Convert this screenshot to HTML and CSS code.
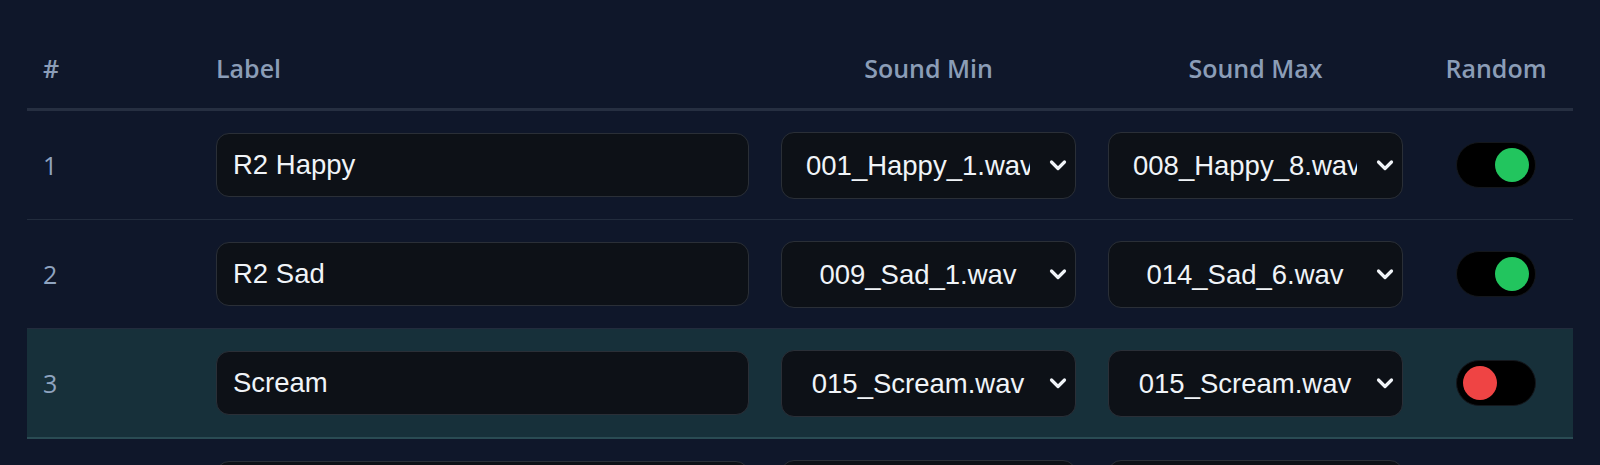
FILE: index.html
```html
<!DOCTYPE html>
<html lang="en">
<head>
    <meta charset="UTF-8">
    <meta name="viewport" content="width=device-width, initial-scale=1.0">
    <title>Sound Triggers</title>
    <link rel="stylesheet" href="styles.css">
</head>
<body>
    <div class="wrap">
        <table class="sounds">
            <colgroup>
                <col class="c-num">
                <col class="c-label">
                <col class="c-snd">
                <col class="c-snd">
                <col class="c-rand">
            </colgroup>
            <thead>
                <tr>
                    <th>#</th>
                    <th>Label</th>
                    <th class="center">Sound Min</th>
                    <th class="center">Sound Max</th>
                    <th class="center">Random</th>
                </tr>
            </thead>
            <tbody>
                <tr>
                    <td class="num">1</td>
                    <td><input class="label-input" type="text" value="R2 Happy"></td>
                    <td><select class="snd"><option>001_Happy_1.wav</option></select></td>
                    <td><select class="snd"><option>008_Happy_8.wav</option></select></td>
                    <td class="center"><label class="toggle on"><span class="knob"></span></label></td>
                </tr>
                <tr>
                    <td class="num">2</td>
                    <td><input class="label-input" type="text" value="R2 Sad"></td>
                    <td><select class="snd"><option>009_Sad_1.wav</option></select></td>
                    <td><select class="snd"><option>014_Sad_6.wav</option></select></td>
                    <td class="center"><label class="toggle on"><span class="knob"></span></label></td>
                </tr>
                <tr class="active">
                    <td class="num">3</td>
                    <td><input class="label-input" type="text" value="Scream"></td>
                    <td><select class="snd"><option>015_Scream.wav</option></select></td>
                    <td><select class="snd"><option>015_Scream.wav</option></select></td>
                    <td class="center"><label class="toggle"><span class="knob"></span></label></td>
                </tr>
                <tr>
                    <td class="num">4</td>
                    <td><input class="label-input" type="text" value="Whistle"></td>
                    <td><select class="snd"><option>016_Whistle_1.wav</option></select></td>
                    <td><select class="snd"><option>019_Whistle_4.wav</option></select></td>
                    <td class="center"><label class="toggle on"><span class="knob"></span></label></td>
                </tr>
            </tbody>
        </table>
    </div>
</body>
</html>
```

FILE: styles.css
```css
body {
    margin: 0;
    background: #0f172a;
    font-family: "Open Sans", "Noto Sans", sans-serif;
    overflow: hidden;
}
.wrap {
    padding: 27px;
}
.sounds {
    width: 100%;
    border-collapse: collapse;
    table-layout: fixed;
}
.c-num { width: 173px; }
.c-label { width: 565px; }
.c-snd { width: 327px; }
.c-rand { width: 154px; }

.sounds th {
    height: 81px;
    padding: 0 16px;
    text-align: left;
    font-size: 25px;
    font-weight: 600;
    color: #8b9db7;
    border-bottom: 3px solid #262f41;
}
.sounds th.center,
.sounds td.center {
    text-align: center;
}
.sounds td {
    height: 108px;
    padding: 0 16px;
    border-bottom: 1px solid #222c3d;
}
.sounds td.num {
    font-size: 25px;
    color: #8fa4c0;
}
.sounds tr.active td {
    background: #17303a;
    border-bottom: 2px solid #2a4b53;
}

.label-input,
.snd {
    box-sizing: border-box;
    width: 100%;
    background: #0d1117;
    color: #f0f4f8;
    border: 1px solid #2a2f37;
    border-radius: 13px;
    font-family: "Liberation Sans", Arial, sans-serif;
    font-size: 27.5px;
    outline: none;
}
.label-input {
    height: 64px;
    padding: 0 16px;
}
.snd {
    height: 67px;
    padding: 0 45px 0 24px;
    appearance: none;
    -webkit-appearance: none;
    text-align: center;
    text-align-last: center;
    background-image: url("data:image/svg+xml,%3Csvg xmlns='http://www.w3.org/2000/svg' width='18' height='12' viewBox='0 0 18 12'%3E%3Cpath d='M2.5 3l6.5 6.5 6.5-6.5' fill='none' stroke='%23f0f4f8' stroke-width='3.2' stroke-linecap='round' stroke-linejoin='round'/%3E%3C/svg%3E");
    background-repeat: no-repeat;
    background-position: right 8px center;
    background-size: 18px 12px;
}

.toggle {
    display: inline-flex;
    box-sizing: border-box;
    width: 80px;
    height: 46px;
    padding: 6px;
    background: #000;
    border: 1px solid #14171c;
    border-radius: 23px;
    vertical-align: middle;
    justify-content: flex-start;
    align-items: center;
}
.toggle.on {
    justify-content: flex-end;
}
.knob {
    width: 34px;
    height: 34px;
    border-radius: 50%;
    background: #ef4444;
}
.toggle.on .knob {
    background: #22c55e;
}
```
